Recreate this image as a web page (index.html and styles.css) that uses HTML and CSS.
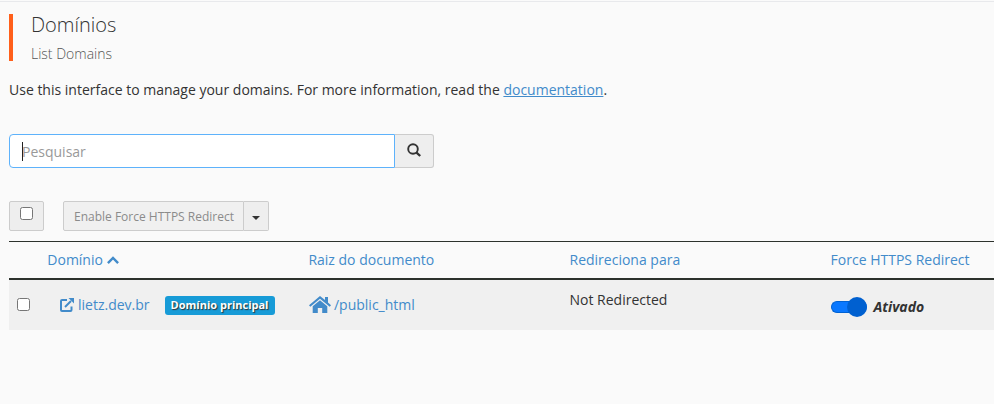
FILE: index.html
```html
<!DOCTYPE html>
<html lang="pt-BR">
<head>
<meta charset="utf-8">
<title>Domínios</title>
<link rel="stylesheet" href="styles.css">
</head>
<body>
<main class="page">
  <header class="page-header">
    <h1>Domínios</h1>
    <p>List Domains</p>
  </header>
  <p class="intro">Use this interface to manage your domains. For more information, read the <a href="#">documentation</a>.</p>

  <div class="search">
    <div class="search-field">
      <input type="text" placeholder="Pesquisar">
      <span class="caret-line"></span>
    </div>
    <button class="search-button" type="button" aria-label="Pesquisar">
      <svg width="14" height="14" viewBox="0 0 14 14" fill="none" stroke="#333"><circle cx="6" cy="6" r="4.8" stroke-width="1.9"/><path d="M9.300 9.300l3.900 3.700" stroke-width="2.300"/></svg>
    </button>
  </div>

  <div class="toolbar">
    <div class="select-all"><span class="check"></span></div>
    <div class="button-group">
      <button class="action" type="button">Enable Force HTTPS Redirect</button>
      <button class="drop" type="button" aria-label="Menu"><span class="arrow"></span></button>
    </div>
  </div>

  <section class="table">
    <div class="row head">
      <div></div>
      <div class="name">Domínio <svg width="12" height="8" viewBox="0 0 12 8" fill="none" stroke="#428bca" stroke-width="2.4"><path d="M.9 7.1L6 2l5.100 5.100"/></svg></div>
      <div>Raiz do documento</div>
      <div>Redireciona para</div>
      <div>Force HTTPS Redirect</div>
    </div>
    <div class="row body">
      <div class="pick"><span class="check"></span></div>
      <div class="domain">
        <svg width="14" height="14" viewBox="0 0 14 14" fill="none" stroke="#428bca" stroke-width="2"><path d="M7 2H2Q1 2 1 3v9q0 1 1 1h8.500q1 0 1-1V8.500"/><path d="M5 9l6-6"/><path d="M8.500 0H14v5.500z" fill="#428bca" stroke="none"/></svg>
        <a>lietz.dev.br</a>
        <span class="badge">Domínio principal</span>
      </div>
      <div class="root">
        <svg width="22" height="17" viewBox="0 0 22 17" fill="#428bca"><path d="M11 0L16 4V1h3v5.500l3 2.700-1.300 1.500L11 2.700 1.300 10.700 0 9.200z"/><path d="M11 4.300l7.300 6V17h-5.100v-5H8.800v5H3.700v-6.700z"/></svg>
        <a>/public_html</a>
      </div>
      <div class="target">Not Redirected</div>
      <div class="status"><span class="switch"><span class="knob"></span></span><em>Ativado</em></div>
    </div>
  </section>
</main>
</body>
</html>
```
FILE: styles.css
```css
* { box-sizing: border-box; }
body {
  margin: 0;
  background: #fafafa;
  color: #333;
  font: 14px/20px "Open Sans", sans-serif;
  overflow: hidden;
}
.page {
  margin-top: 1px;
  border-top: 1px solid #e8e9ec;
  padding: 12px 0 0 9px;
}
.page-header {
  height: 47px;
  border-left: 4px solid #ff5f1a;
  padding-left: 18px;
}
h1 { margin: 0; font-size: 20px; line-height: 22px; font-weight: 300; }
.page-header p { margin: 8px 0 0; line-height: 20px; font-weight: 300; color: #555; }
.intro { margin: 19px 0 34px; }
.intro a { color: #428bca; text-decoration: underline; }

.search { display: flex; width: 425px; height: 34px; }
.search-field { position: relative; width: 386px; }
.search input {
  display: block;
  width: 100%;
  height: 34px;
  border: 1px solid #5eb2fb;
  border-radius: 4px 0 0 4px;
  padding: 0 12px;
  background: #fff;
  font: 14px "Open Sans", sans-serif;
  outline: none;
}
.search input::placeholder { color: #999; opacity: 1; }
.caret-line { position: absolute; left: 13px; top: 8px; width: 1px; height: 19px; background: #222; }
.search-button {
  display: flex;
  width: 39px;
  padding: 8px 0 0 12px;
  border: 1px solid #ccc;
  border-left: 0;
  border-radius: 0 3px 3px 0;
  background: #eee;
}
.search-button svg { display: block; }

.toolbar { display: flex; gap: 19px; margin-top: 33px; height: 30px; }
.select-all {
  width: 35px;
  padding: 5px 0 0 10px;
  border: 1px solid #ccc;
  border-radius: 2px;
  background: #eee;
}
.check {
  display: block;
  width: 13px;
  height: 13px;
  border: 1px solid #767676;
  border-radius: 2.5px;
  background: #fff;
}
.button-group { display: flex; width: 206px; }
.button-group button { border: 1px solid #ccc; padding: 0; font: 12px/28px "Open Sans", sans-serif; }
.button-group .action {
  width: 181px;
  padding: 1px 0 0 1px;
  border-radius: 2px 0 0 2px;
  background: #f0f0f0;
  color: #8b8b8b;
  white-space: nowrap;
}
.button-group .drop {
  display: flex;
  width: 25px;
  border-left: 0;
  border-radius: 0 2px 2px 0;
  background: #eee;
  padding: 14px 0 0 8px;
}
.arrow { border: 4px solid transparent; border-top-color: #333; border-bottom: 0; }

.table { margin-top: 10px; border-top: 1px solid #2d322d; }
.row { display: grid; grid-template-columns: 38.3px 261.1px 261.1px 261.1px 1fr; }
.head {
  height: 38px;
  padding-top: 8px;
  border-bottom: 2px solid #2d322d;
  color: #428bca;
}
.name svg { position: relative; top: -1px; }
.body { height: 50px; background: #f0f0f0; }
.pick { padding: 18px 0 0 8px; }
.domain, .root, .status { display: flex; }
.domain { padding: 15px 0 0 12.7px; color: #428bca; }
.domain svg { margin: 3px 4px 0 0; }
.badge {
  width: 110px;
  height: 19px;
  margin: 1px 0 0 15px;
  border-radius: 3px;
  background: #179bd7;
  color: #fff;
  font-size: 11px;
  line-height: 18px;
  font-weight: 700;
  text-align: center;
  white-space: nowrap;
  text-shadow: 1px 1px 1px #333;
}
.root { padding: 15px 0 0 .6px; color: #428bca; }
.root svg { margin: 1px 3px 0 0; }
.target { padding-top: 10px; }
.status { padding: 17px 0 0 .4px; }
.switch {
  display: flex;
  justify-content: flex-end;
  align-items: center;
  width: 36px;
  height: 12px;
  margin: 4px 6.500px 0 0;
  border: 1px solid #0062d3;
  border-width: 1px 0 1px 1px;
  border-radius: 6px;
  background: #0a78ff;
}
.knob { flex: none; width: 20px; height: 20px; border-radius: 50%; background: #0060d0; }
.status em { font-weight: 700; }
```
